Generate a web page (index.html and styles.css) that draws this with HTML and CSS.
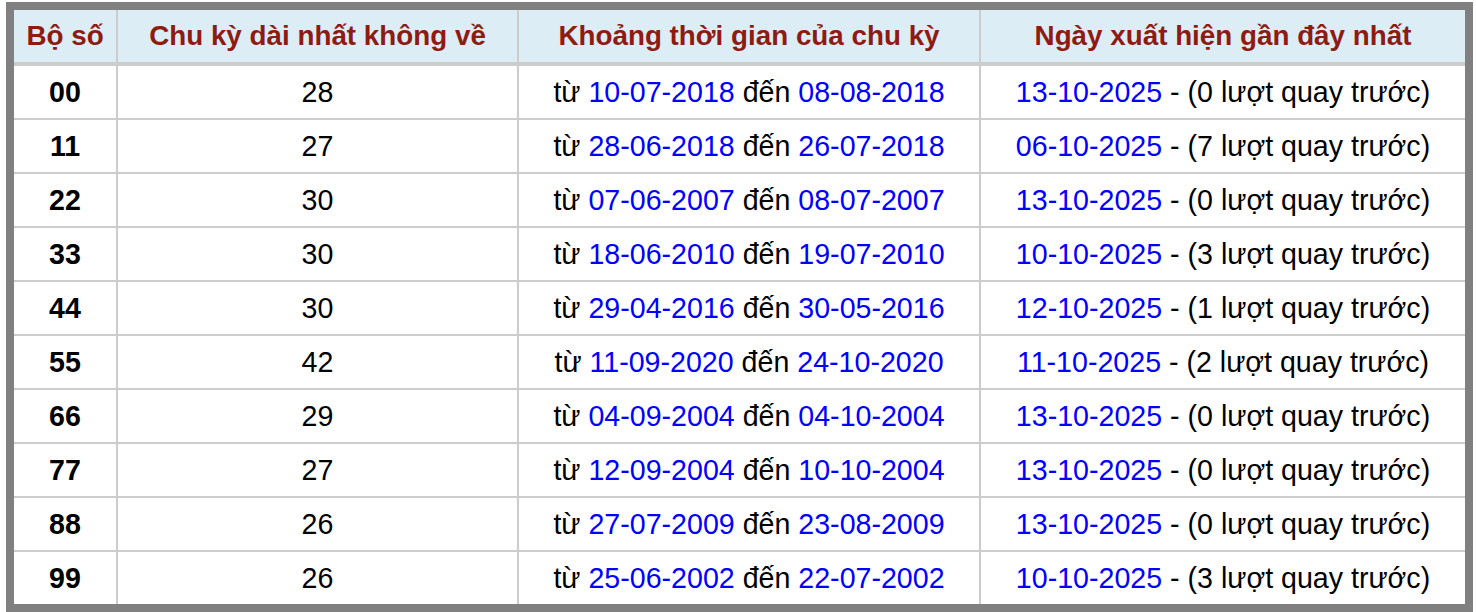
FILE: index.html
```html
<!DOCTYPE html>
<html lang="vi">
<head>
<meta charset="utf-8">
<title>Chu kỳ dài nhất không về</title>
<link rel="stylesheet" href="styles.css">
</head>
<body>
<table class="stats">
  <thead>
    <tr>
      <th class="c1">Bộ số</th>
      <th class="c2">Chu kỳ dài nhất không về</th>
      <th class="c3">Khoảng thời gian của chu kỳ</th>
      <th class="c4">Ngày xuất hiện gần đây nhất</th>
    </tr>
  </thead>
  <tbody>
    <tr><td class="num">00</td><td>28</td><td>từ <span class="d">10-07-2018</span> đến <span class="d">08-08-2018</span></td><td><span class="d">13-10-2025</span> - (0 lượt quay trước)</td></tr>
    <tr><td class="num">11</td><td>27</td><td>từ <span class="d">28-06-2018</span> đến <span class="d">26-07-2018</span></td><td><span class="d">06-10-2025</span> - (7 lượt quay trước)</td></tr>
    <tr><td class="num">22</td><td>30</td><td>từ <span class="d">07-06-2007</span> đến <span class="d">08-07-2007</span></td><td><span class="d">13-10-2025</span> - (0 lượt quay trước)</td></tr>
    <tr><td class="num">33</td><td>30</td><td>từ <span class="d">18-06-2010</span> đến <span class="d">19-07-2010</span></td><td><span class="d">10-10-2025</span> - (3 lượt quay trước)</td></tr>
    <tr><td class="num">44</td><td>30</td><td>từ <span class="d">29-04-2016</span> đến <span class="d">30-05-2016</span></td><td><span class="d">12-10-2025</span> - (1 lượt quay trước)</td></tr>
    <tr><td class="num">55</td><td>42</td><td>từ <span class="d">11-09-2020</span> đến <span class="d">24-10-2020</span></td><td><span class="d">11-10-2025</span> - (2 lượt quay trước)</td></tr>
    <tr><td class="num">66</td><td>29</td><td>từ <span class="d">04-09-2004</span> đến <span class="d">04-10-2004</span></td><td><span class="d">13-10-2025</span> - (0 lượt quay trước)</td></tr>
    <tr><td class="num">77</td><td>27</td><td>từ <span class="d">12-09-2004</span> đến <span class="d">10-10-2004</span></td><td><span class="d">13-10-2025</span> - (0 lượt quay trước)</td></tr>
    <tr><td class="num">88</td><td>26</td><td>từ <span class="d">27-07-2009</span> đến <span class="d">23-08-2009</span></td><td><span class="d">13-10-2025</span> - (0 lượt quay trước)</td></tr>
    <tr><td class="num">99</td><td>26</td><td>từ <span class="d">25-06-2002</span> đến <span class="d">22-07-2002</span></td><td><span class="d">10-10-2025</span> - (3 lượt quay trước)</td></tr>
  </tbody>
</table>
</body>
</html>
```

FILE: styles.css
```css
html, body {
  background: #ffffff;
}
body {
  margin: 2px 0 0 6px;
  font-family: "Liberation Sans", Arial, Helvetica, sans-serif;
  font-size: 28.6px;
  color: #000000;
}
.stats {
  table-layout: fixed;
  border-collapse: separate;
  border-spacing: 0;
  border: 8px solid #808080;
  width: 1467px;
  box-sizing: border-box;
  background: #ffffff;
}
.stats th,
.stats td {
  padding: 0;
  text-align: center;
  vertical-align: middle;
  white-space: nowrap;
  line-height: 52px;
  border-right: 2px solid #cccccc;
  border-bottom: 2px solid #cccccc;
}
.stats th:last-child,
.stats td:last-child {
  border-right: none;
}
.stats tbody tr:last-child td {
  border-bottom: none;
}
.stats th {
  background: #dcedf6;
  color: #8e1b12;
  font-weight: bold;
  font-size: 27.8px;
  border-bottom: 4px solid #cccccc;
}
.stats .c1 { width: 102px; }
.stats .c2 { width: 399px; }
.stats .c3 { width: 460px; }
.stats .c4 { width: auto; }
.stats .num {
  font-weight: bold;
}
.stats .d {
  color: #0000ff;
}
```
